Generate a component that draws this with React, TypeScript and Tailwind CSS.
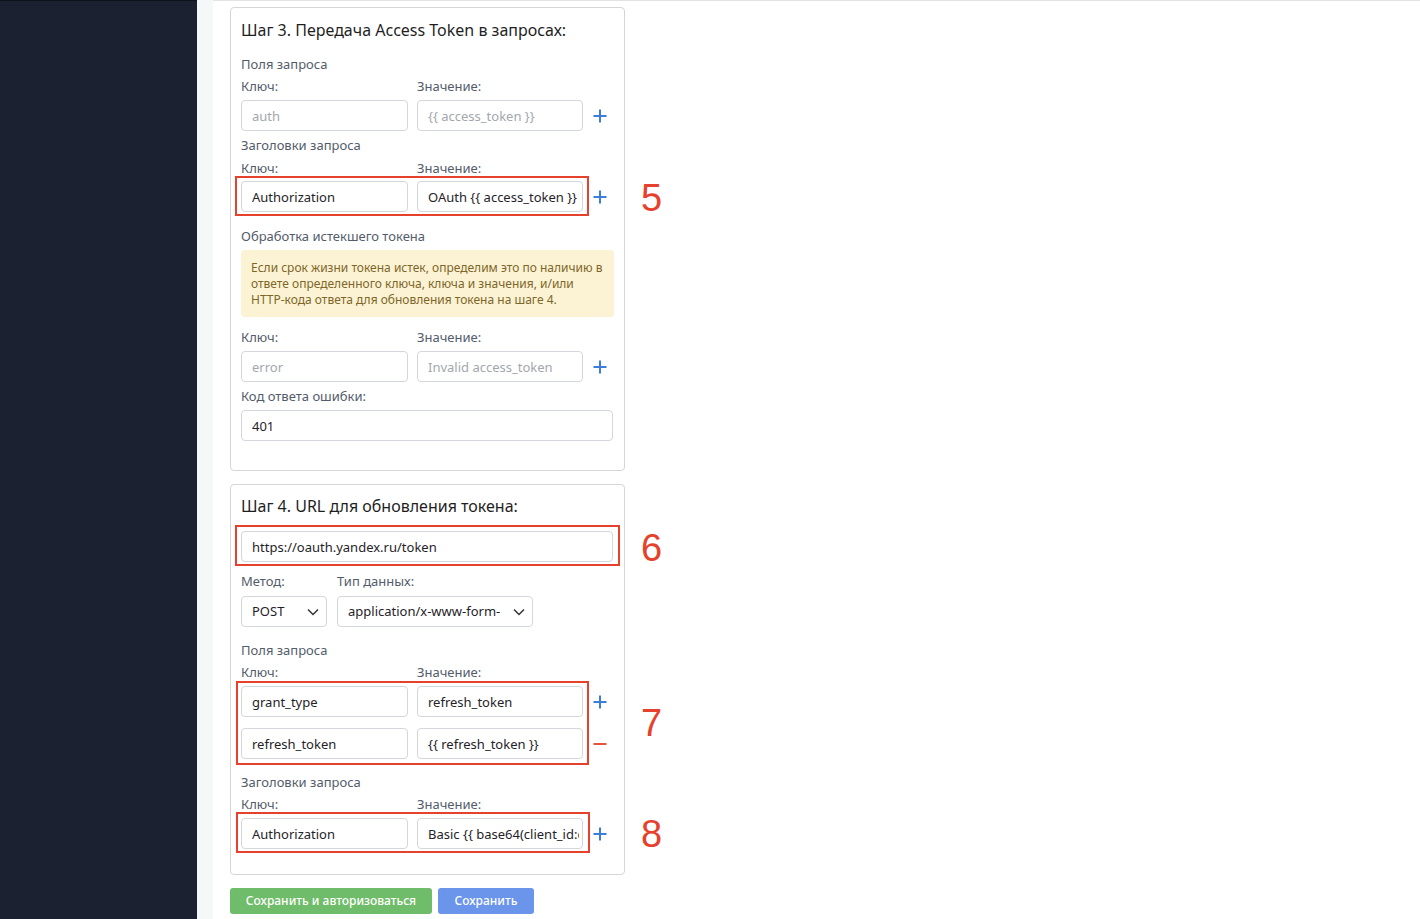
import React from 'react';

const font = { fontFamily: '"Noto Sans", "Open Sans", sans-serif' };

function Plus() {
  return (
    <svg width="14" height="14" viewBox="0 0 14 14" className="text-[#3b7dd8]">
      <path d="M7 0.5v13M0.5 7h13" stroke="currentColor" strokeWidth="2" fill="none" />
    </svg>
  );
}

function Minus() {
  return (
    <svg width="14" height="14" viewBox="0 0 14 14" className="text-[#e4533d]">
      <path d="M0.5 7h13" stroke="currentColor" strokeWidth="2" fill="none" />
    </svg>
  );
}

function Chevron() {
  return (
    <svg width="12" height="8" viewBox="0 0 12 8">
      <path d="M1 1.5l5 5 5-5" stroke="#333" strokeWidth="1.5" fill="none" />
    </svg>
  );
}

function Input({ value, placeholder, className = '' }: { value?: string; placeholder?: string; className?: string }) {
  return (
    <input
      readOnly
      value={value ?? ''}
      placeholder={placeholder}
      className={`h-[31px] shrink-0 border border-[#d3d7dd] rounded-[4px] bg-white pl-[10px] pr-[3px] text-[13px] text-[#1f2329] placeholder:text-[#a3a7ad] outline-none ${className}`}
    />
  );
}

function Label({ children, className = '' }: { children: React.ReactNode; className?: string }) {
  return <div className={`text-[13px] leading-[18px] text-[#535c6b] ${className}`}>{children}</div>;
}

function Annot({ n, top }: { n: string; top: number }) {
  return (
    <div
      className="absolute left-[400px] text-[38px] leading-none text-[#e6412c]"
      style={{ top, fontFamily: '"Liberation Sans", Arial, sans-serif' }}
    >
      {n}
    </div>
  );
}

function KVRow({ k, v, kp, vp, icon = 'plus' }: { k?: string; v?: string; kp?: string; vp?: string; icon?: 'plus' | 'minus' }) {
  return (
    <div className="flex items-center">
      <Input value={k} placeholder={kp} className="w-[167px]" />
      <Input value={v} placeholder={vp} className="w-[166px] ml-[9px]" />
      <div className="w-[30px] shrink-0 pl-[3px] flex justify-center">{icon === 'plus' ? <Plus /> : <Minus />}</div>
    </div>
  );
}

function KVLabels({ className = '' }: { className?: string }) {
  return (
    <div className={`flex ${className}`}>
      <Label className="w-[176px]">Ключ:</Label>
      <Label>Значение:</Label>
    </div>
  );
}

export default function App() {
  return (
    <div className="flex min-h-screen bg-white" style={font}>
      <aside className="w-[197px] shrink-0 bg-[#1c2131] border-t border-[#0f121b]" />
      <div className="w-[16px] shrink-0 bg-[#f6f7f8]" />
      <main className="flex-1 border-t border-[#e3e3e3] pl-[17px] pt-[6px] pb-[5px]">
        {/* Шаг 3 */}
        <section className="w-[395px] border border-[#d6d6d6] rounded-[4px] px-[10px] pt-[10px] pb-[29px]">
          <h2 className="text-[16px] leading-[24px] text-[#1f1f1f]">Шаг 3. Передача Access Token в запросах:</h2>

          <Label className="mt-[13px]">Поля запроса</Label>
          <KVLabels className="mt-[4px]" />
          <div className="mt-[5px]">
            <KVRow kp="auth" vp="{{ access_token }}" />
          </div>

          <Label className="mt-[5px]">Заголовки запроса</Label>
          <KVLabels className="mt-[5px]" />
          <div className="relative mt-[4px]">
            <KVRow k="Authorization" v="OAuth {{ access_token }}" />
            <div className="absolute -left-[6px] -top-[5px] w-[354px] h-[40px] border-2 border-[#e6412c]" />
            <Annot n="5" top={-2} />
          </div>

          <Label className="mt-[15px]">Обработка истекшего токена</Label>
          <div className="mt-[5px] bg-[#fcf3d5] rounded-[4px] px-[10px] pt-[10px] pb-[9px] text-[12px] leading-[16px] text-[#7e6628]">
            Если срок жизни токена истек, определим это по наличию в ответе определенного ключа, ключа и значения, и/или
            HTTP-кода ответа для обновления токена на шаге 4.
          </div>

          <KVLabels className="mt-[11px]" />
          <div className="mt-[5px]">
            <KVRow kp="error" vp="Invalid access_token" />
          </div>

          <Label className="mt-[5px]">Код ответа ошибки:</Label>
          <Input value="401" className="mt-[5px] w-[372px] block" />
        </section>

        {/* Шаг 4 */}
        <section className="mt-[13px] w-[395px] border border-[#d6d6d6] rounded-[4px] px-[10px] pt-[9px] pb-[25px]">
          <h2 className="text-[16px] leading-[24px] text-[#1f1f1f]">Шаг 4. URL для обновления токена:</h2>

          <div className="relative mt-[13px]">
            <Input value="https://oauth.yandex.ru/token" className="w-[372px] block" />
            <div className="absolute -left-[6px] -top-[6px] w-[385px] h-[41px] border-2 border-[#e6412c]" />
            <Annot n="6" top={-2} />
          </div>

          <div className="flex mt-[10px]">
            <Label className="w-[96px]">Метод:</Label>
            <Label>Тип данных:</Label>
          </div>
          <div className="flex mt-[6px] gap-[10px]">
            <div className="w-[86px] h-[31px] border border-[#d3d7dd] rounded-[4px] pl-[10px] pr-[7px] flex items-center justify-between text-[13px] text-[#1f2329]">
              <span>POST</span>
              <Chevron />
            </div>
            <div className="w-[196px] h-[31px] border border-[#d3d7dd] rounded-[4px] pl-[10px] pr-[7px] flex items-center justify-between text-[13px] text-[#1f2329]">
              <span>application/x-www-form-</span>
              <Chevron />
            </div>
          </div>

          <Label className="mt-[14px]">Поля запроса</Label>
          <KVLabels className="mt-[4px]" />
          <div className="relative mt-[5px]">
            <div className="flex flex-col gap-[11px]">
              <KVRow k="grant_type" v="refresh_token" />
              <KVRow k="refresh_token" v="{{ refresh_token }}" icon="minus" />
            </div>
            <div className="absolute -left-[5px] -top-[5px] w-[353px] h-[84px] border-2 border-[#e6412c]" />
            <Annot n="7" top={18} />
          </div>

          <Label className="mt-[14px]">Заголовки запроса</Label>
          <KVLabels className="mt-[4px]" />
          <div className="relative mt-[5px]">
            <KVRow k="Authorization" v="Basic {{ base64(client_id:client_secret) }}" />
            <div className="absolute -left-[5px] -top-[6px] w-[354px] h-[41px] border-2 border-[#e6412c]" />
            <Annot n="8" top={-3} />
          </div>
        </section>

        <div className="flex gap-[6px] mt-[13px]">
          <button className="w-[202px] h-[26px] rounded-[3px] bg-[#6fbc6a] text-white text-[12px] font-medium">
            Сохранить и авторизоваться
          </button>
          <button className="w-[96px] h-[26px] rounded-[3px] bg-[#6a95eb] text-white text-[12px] font-medium">
            Сохранить
          </button>
        </div>
      </main>
    </div>
  );
}
